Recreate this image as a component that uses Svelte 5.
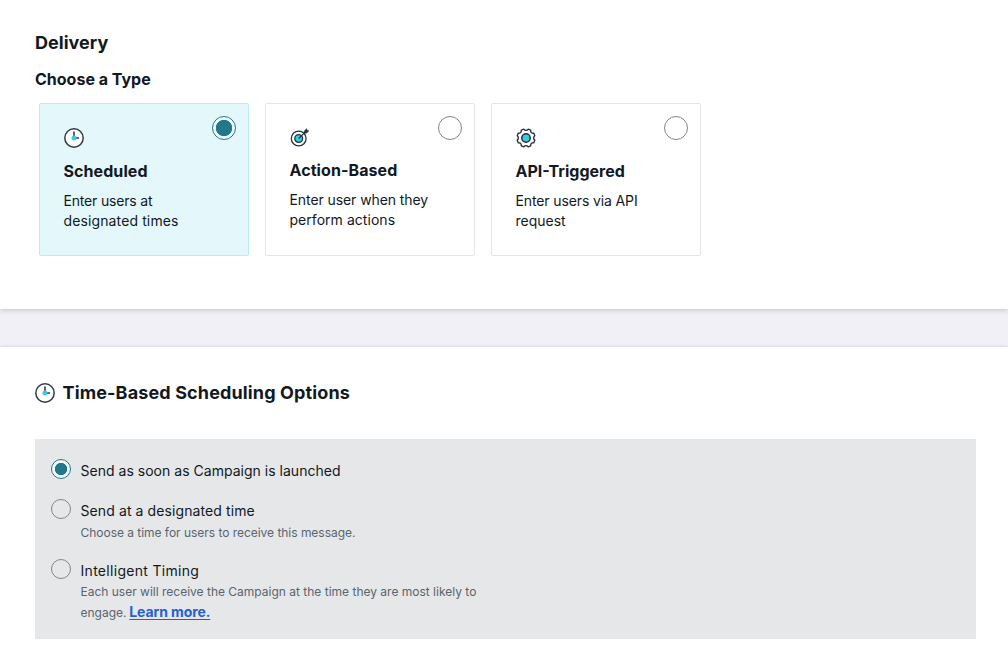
<script>
  let delivery = $state('scheduled');
  let timing = $state('launch');

  const types = [
    { id: 'scheduled', title: 'Scheduled', lines: [['Enter users at', -0.18], ['designated times', 0.12]] },
    { id: 'action', title: 'Action-Based', lines: [['Enter user when they', -0.08], ['perform actions', 0.04]] },
    { id: 'api', title: 'API-Triggered', lines: [['Enter users via API', -0.12], ['request', 0]] }
  ];
</script>

{#snippet clock()}
  <svg class="icon" width="20" height="20" viewBox="0 0 20 20" aria-hidden="true">
    <circle cx="10" cy="10" r="9.2" fill="#fff" stroke="#2f3c48" stroke-width="1.5" />
    <path d="M10 3.4V10h5" fill="none" stroke="#2f3c48" stroke-width="1.6" />
    <circle cx="10" cy="10" r="2.5" fill="#3accdd" />
  </svg>
{/snippet}

{#snippet target()}
  <svg class="icon" width="20" height="20" viewBox="0 0 20 20" aria-hidden="true">
    <g fill="none" stroke="#25323e">
      <circle cx="8.7" cy="10.5" r="7.4" stroke-width="1.3" />
      <circle cx="8.7" cy="10.5" r="3.9" fill="#3accdd" stroke-width="1.3" />
      <path d="M8.7 10.5L16 3.4" stroke-width="1.2" />
      <path d="M14.2 5.2V3L16.7 .6l.5 1.7 1.8.5-2.5 2.4z" fill="#25323e" stroke-width=".4" />
    </g>
  </svg>
{/snippet}

{#snippet gear()}
  <svg class="icon" width="20" height="20" viewBox="0 0 20 20" aria-hidden="true">
    <path d="M7.8 1.2Q10 3.6 12.2 1.2L14.7 2.2Q14.5 5.5 17.8 5.3L18.8 7.8Q16.4 10 18.8 12.2L17.8 14.7Q14.5 14.5 14.7 17.8L12.2 18.8Q10 16.4 7.8 18.8L5.3 17.8Q5.5 14.5 2.2 14.7L1.2 12.2Q3.6 10 1.2 7.8L2.2 5.3Q5.5 5.5 5.3 2.2Z" fill="#fff" stroke="#25323e" stroke-width="1.4" stroke-linejoin="round" />
    <circle cx="10" cy="10" r="4.2" fill="#3accdd" stroke="#25323e" stroke-width="1.5" />
  </svg>
{/snippet}

<main>
  <section class="delivery">
    <h2 class="head">Delivery</h2>
    <h3>Choose a Type</h3>
    <div class="cards">
      {#each types as type}
        <button class="card {type.id}" class:selected={delivery === type.id} onclick={() => (delivery = type.id)}>
          <span class="radio large" class:on={delivery === type.id}></span>
          {#if type.id === 'scheduled'}
            {@render clock()}
          {:else if type.id === 'action'}
            {@render target()}
          {:else}
            {@render gear()}
          {/if}
          <strong>{type.title}</strong>
          <span class="desc">
            {#each type.lines as [text, tracking]}
              <span style="letter-spacing: {tracking}px">{text}</span>
            {/each}
          </span>
        </button>
      {/each}
    </div>
  </section>

  <section class="schedule">
    <h2 class="title">{@render clock()}<span>Time-Based Scheduling Options</span></h2>
    <div class="options">
      <div class="option first">
        <button class="radio" class:on={timing === 'launch'} aria-labelledby="launch" onclick={() => (timing = 'launch')}></button>
        <div class="label" id="launch">Send as soon as Campaign is launched</div>
      </div>
      <div class="option second">
        <button class="radio" class:on={timing === 'time'} aria-labelledby="time" onclick={() => (timing = 'time')}></button>
        <div>
          <div class="label wide" id="time">Send at a designated time</div>
          <div class="hint tight">Choose a time for users to receive this message.</div>
        </div>
      </div>
      <div class="option third">
        <button class="radio" class:on={timing === 'smart'} aria-labelledby="smart" onclick={() => (timing = 'smart')}></button>
        <div>
          <div class="label wider" id="smart">Intelligent Timing</div>
          <div class="hint">Each user will receive the Campaign at the time they are most likely to<br />engage. <a href="#learn">Learn more.</a></div>
        </div>
      </div>
    </div>
  </section>
</main>

<style>
  :global(body) {
    background: #f1f0f6;
    overflow: hidden;
  }
  main {
    height: 655px;
    display: flex;
    flex-direction: column;
    gap: 38px;
    color: #12181f;
    font-family: Inter, 'Liberation Sans', sans-serif;
  }
  h2, h3 { margin: 0; font-weight: 700; }
  section {
    box-sizing: border-box;
    padding: 0 35px;
    background: #fff;
    box-shadow: 0 1px 5px rgba(0, 0, 0, 0.2);
  }
  .delivery { height: 309px; padding-top: 30px; }
  .schedule { height: 308px; padding: 34px 32px 0 35px; }
  .head { font-size: 18px; line-height: 26px; letter-spacing: 0.03px; }
  h3 { margin-top: 11px; font-size: 16px; line-height: 24px; letter-spacing: 0; }
  .cards { display: flex; gap: 16px; margin: 12px 0 0 4px; }
  .card {
    position: relative;
    display: flex;
    flex-direction: column;
    align-items: flex-start;
    box-sizing: border-box;
    width: 210px;
    height: 153px;
    padding: 24px;
    border: 1px solid #e3e5e7;
    border-radius: 2px;
    background: #fff;
    color: inherit;
    font: inherit;
    text-align: left;
  }
  .card.selected { background: #e4f8fb; border-color: #b9edf2; }
  .icon { display: block; flex: none; overflow: visible; }
  strong { margin: 11px 0 0 -0.5px; font-size: 16px; line-height: 24px; font-weight: 700; letter-spacing: 0.08px; }
  .action strong { margin-top: 10px; }
  .api strong { letter-spacing: 0; }
  .desc { display: flex; flex-direction: column; margin: 8px 0 0 -0.5px; font-size: 14px; line-height: 20px; }
  .radio {
    flex: none;
    box-sizing: border-box;
    width: 20px;
    height: 20px;
    padding: 0;
    border: 1px solid #7d8790;
    border-radius: 50%;
    background: transparent;
  }
  .radio.on {
    border-color: #21788b;
    background: radial-gradient(circle, #21788b 5.8px, #f4fafb 6.5px);
  }
  .radio.large { position: absolute; top: 12px; right: 12px; width: 24px; height: 24px; }
  .radio.large.on { background: radial-gradient(circle, #21788b 7.8px, #f0fbfc 8.5px); }
  .title { display: flex; align-items: center; gap: 7.5px; font-size: 18px; line-height: 24px; letter-spacing: 0.13px; }
  .options {
    box-sizing: border-box;
    height: 200px;
    margin-top: 34px;
    padding: 20px 16px;
    background: #e6e7e9;
  }
  .option { display: flex; gap: 9.5px; }
  .first { height: 40px; }
  .second { height: 60px; }
  .label { margin-top: 2px; font-size: 14px; line-height: 20px; letter-spacing: 0.02px; }
  .wide { letter-spacing: 0.1px; }
  .wider { letter-spacing: 0.3px; }
  .hint { margin-top: 1px; color: #59656f; font-size: 12px; line-height: 21px; letter-spacing: 0; }
  .tight { letter-spacing: -0.03px; }
  .third .hint { margin-top: 0; }
  a { color: #2560d2; font-size: 14px; font-weight: 700; line-height: 1; letter-spacing: -0.1px; margin-left: -0.6px; text-underline-offset: 2px; }
</style>
